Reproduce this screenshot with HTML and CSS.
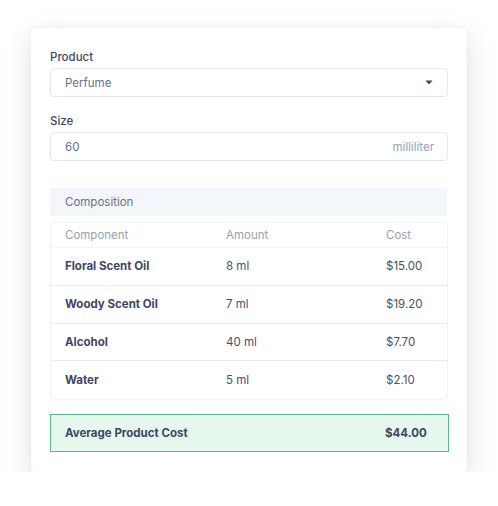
FILE: index.html
```html
<!DOCTYPE html>
<html>
<head>
<meta charset="utf-8">
<link rel="stylesheet" href="styles.css">
</head>
<body>
<div class="card">
  <div class="field">
    <div class="label">Product</div>
    <div class="control">
      <span class="value">Perfume</span>
      <svg class="caret" width="8" height="5" viewBox="0 0 8 5"><path d="M0.5 0.5h7L4 4.5z" fill="#3f4760"/></svg>
    </div>
  </div>
  <div class="field">
    <div class="label">Size</div>
    <div class="control">
      <span class="value">60</span>
      <span class="unit">milliliter</span>
    </div>
  </div>
  <div class="section">Composition</div>
  <div class="table">
    <div class="row head"><span>Component</span><span>Amount</span><span>Cost</span></div>
    <div class="row"><span class="name">Floral Scent Oil</span><span>8 ml</span><span>$15.00</span></div>
    <div class="row"><span class="name">Woody Scent Oil</span><span>7 ml</span><span>$19.20</span></div>
    <div class="row"><span class="name">Alcohol</span><span>40 ml</span><span>$7.70</span></div>
    <div class="row last"><span class="name">Water</span><span>5 ml</span><span>$2.10</span></div>
  </div>
  <div class="total"><span>Average Product Cost</span><span>$44.00</span></div>
</div>
</body>
</html>
```
FILE: styles.css
```css
html, body { margin: 0; padding: 0; background: #fff; }
body { font-family: "Inter", "Lato", sans-serif; color: #3f4662; }
.card {
  margin: 28px 0 0 31px;
  width: 436px;
  height: 444px;
  box-sizing: border-box;
  padding: 20px 19px 0 19px;
  background: #fff;
  border-radius: 4px;
  box-shadow: 0 10px 30px rgba(30, 40, 70, 0.13), 0 0 6px rgba(30,40,70,0.05);
}
.field { margin-bottom: 15px; }
.label { font-size: 11.5px; font-weight: 500; color: #3f4662; line-height: 18px; margin-bottom: 2px; }
.control {
  height: 29px;
  border: 1px solid #e4e8ee;
  border-radius: 4px;
  display: flex;
  align-items: center;
  justify-content: space-between;
  padding: 0 13px 0 14px;
  box-sizing: border-box;
  width: 398px;
}
.value { font-size: 11.5px; color: #6a7088; }
.unit { font-size: 11.5px; color: #9a9fb0; }
.caret { margin-right: 1px; }
.section {
  margin-top: 27px;
  height: 28px;
  background: #f3f7fb;
  display: flex;
  align-items: center;
  padding-left: 15px;
  font-size: 11.5px;
  color: #6a7088;
  width: 397px;
  box-sizing: border-box;
}
.table {
  margin-top: 6px;
  width: 398px;
  border: 1px solid #f0f2f6;
  border-radius: 3px;
  box-sizing: border-box;
}
.row {
  display: grid;
  grid-template-columns: 161px 160px 1fr;
  align-items: center;
  padding-left: 14px;
  height: 37.75px;
  box-sizing: border-box;
  border-bottom: 1px solid #e9edf3;
  font-size: 11.5px;
  color: #4a5068;
}
.row.head { height: 25px; color: #9a9fb0; border-bottom: 1px solid #f3f5f8; }
.row.last { border-bottom: none; }
.name { font-weight: 700; color: #3f4662; }
.total {
  margin-top: 14px;
  width: 399px;
  height: 38px;
  box-sizing: border-box;
  border: 1.5px solid #5cb886;
  background: #e6f7ee;
  display: grid;
  grid-template-columns: 320px 1fr;
  align-items: center;
  padding-left: 14px;
  font-size: 11.5px;
  font-weight: 700;
  color: #3f4662;
}
```
